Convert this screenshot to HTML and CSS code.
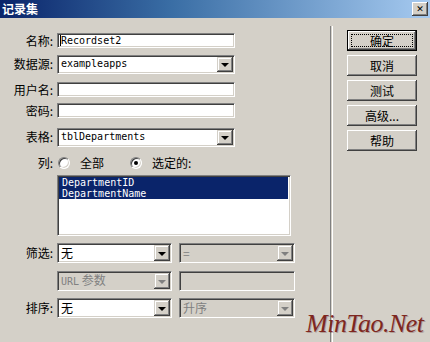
FILE: index.html
```html
<!DOCTYPE html>
<html lang="zh-CN">
  <head>
    <meta charset="UTF-8" />
    <title>记录集</title>
    <link rel="stylesheet" href="styles.css">
  </head>
  <body>
    <div class="window">
      <div class="titlebar">
        <span class="title">记录集</span>
        <span class="close">&#x2715;</span>
      </div>
      <div class="main">
        <div class="form">
          <div class="row r-name">
            <label class="lbl">名称:</label>
            <div class="edit wide"><span class="caret"></span>Recordset2</div>
          </div>
          <div class="row r-src">
            <label class="lbl">数据源:</label>
            <div class="select wide"><span class="val mono">exampleapps</span><span class="arrow"></span></div>
          </div>
          <div class="row r-user">
            <label class="lbl">用户名:</label>
            <div class="edit wide"></div>
          </div>
          <div class="row r-pass">
            <label class="lbl">密码:</label>
            <div class="edit wide"></div>
          </div>
          <div class="row r-table">
            <label class="lbl">表格:</label>
            <div class="select wide"><span class="val mono">tblDepartments</span><span class="arrow"></span></div>
          </div>
          <div class="row r-cols">
            <label class="lbl">列:</label>
            <span class="radio"></span><span class="opt">全部</span>
            <span class="radio on"></span><span class="opt">选定的:</span>
          </div>
          <div class="row r-list">
            <span class="lbl"></span>
            <div class="listbox">
              <div class="item sel">DepartmentID</div>
              <div class="item sel">DepartmentName</div>
            </div>
          </div>
          <div class="row r-filter">
            <label class="lbl">筛选:</label>
            <div class="select half"><span class="val">无</span><span class="arrow"></span></div>
            <div class="select half off"><span class="val">=</span><span class="arrow"></span></div>
          </div>
          <div class="row r-param">
            <span class="lbl"></span>
            <div class="select half off"><span class="val"><span class="mono">URL</span> 参数</span><span class="arrow"></span></div>
            <div class="edit half off"></div>
          </div>
          <div class="row r-sort">
            <label class="lbl">排序:</label>
            <div class="select half"><span class="val">无</span><span class="arrow"></span></div>
            <div class="select half off"><span class="val">升序</span><span class="arrow"></span></div>
          </div>
        </div>
        <div class="divider"></div>
        <div class="actions">
          <button class="btn default"><span class="focus">确定</span></button>
          <button class="btn">取消</button>
          <button class="btn">测试</button>
          <button class="btn">高级...</button>
          <button class="btn">帮助</button>
        </div>
      </div>
      <div class="watermark">MinTao.Net</div>
    </div>
  </body>
</html>
```

FILE: styles.css
```css
body {
  margin: 0;
  background: #d4d0c8;
}
.window {
  position: relative;
  width: 430px;
  height: 342px;
  overflow: hidden;
  background: #d4d0c8;
  font-family: "Noto Sans CJK SC", "Liberation Sans", sans-serif;
  font-size: 12px;
  line-height: 14px;
  color: #000;
}
.titlebar {
  height: 18px;
  display: flex;
  align-items: center;
  justify-content: space-between;
  padding: 0 2px 0 2px;
  background: linear-gradient(to right, #0a246a, #3a6ea5 40%, #a6caf0);
}
.title {
  color: #fff;
  font-weight: bold;
  font-size: 12px;
  line-height: 18px;
}
.close {
  width: 16px;
  height: 14px;
  box-sizing: border-box;
  background: #d4d0c8;
  box-shadow: inset -1px -1px #404040, inset 1px 1px #fff, inset -2px -2px #808080;
  font-family: "DejaVu Sans", sans-serif;
  font-size: 9px;
  font-weight: bold;
  line-height: 14px;
  text-align: center;
}
.main {
  display: flex;
  height: 324px;
}
.form {
  width: 330px;
  padding-top: 15px;
  box-sizing: border-box;
}
.row {
  display: flex;
  align-items: center;
  height: 20px;
}
.lbl {
  width: 53px;
  flex: none;
  text-align: right;
  margin-right: 4px;
  white-space: nowrap;
  line-height: 14px;
}
.r-name, .r-user, .r-pass { height: 15px; }
.r-src { margin-top: 6px; }
.r-user { margin-top: 8px; }
.r-pass { margin-top: 6px; }
.r-table { margin-top: 9px; }
.r-cols { margin-top: 9px; height: 14px; }
.r-list { margin-top: 5px; height: 61px; }
.r-filter { margin-top: 7px; }
.r-param { margin-top: 8px; }
.r-sort { margin-top: 7px; }
.mono {
  font-family: "DejaVu Sans Mono", "Liberation Mono", monospace;
  font-size: 10px;
}
.edit {
  height: 15px;
  box-sizing: border-box;
  background: #fff;
  border-top: 1px solid #808080;
  border-left: 1px solid #808080;
  border-right: 1px solid #fff;
  border-bottom: 1px solid #fff;
  box-shadow: inset 1px 1px #404040, inset -1px -1px #d4d0c8;
  padding-left: 2px;
  font-family: "DejaVu Sans Mono", "Liberation Mono", monospace;
  font-size: 10px;
  line-height: 13px;
  display: flex;
  align-items: center;
}
.caret {
  width: 1px;
  height: 11px;
  background: #000;
}
.wide { width: 178px; }
.half { width: 115px; flex: none; }
.half + .half { margin-left: 7px; width: 116px; }
.r-param .edit.half { height: 20px; }
.select {
  height: 20px;
  box-sizing: border-box;
  background: #fff;
  border-top: 1px solid #808080;
  border-left: 1px solid #808080;
  border-right: 1px solid #fff;
  border-bottom: 1px solid #fff;
  box-shadow: inset 1px 1px #404040, inset -1px -1px #d4d0c8;
  padding: 1px 1px 1px 3px;
  display: flex;
  align-items: center;
  justify-content: space-between;
}
.r-src .select, .r-table .select { height: 19px; }
.r-src .arrow, .r-table .arrow { height: 15px; }
.val {
  line-height: 16px;
  white-space: nowrap;
}
.arrow {
  width: 16px;
  height: 16px;
  flex: none;
  box-sizing: border-box;
  background: #d4d0c8;
  box-shadow: inset -1px -1px #404040, inset 1px 1px #d4d0c8, inset -2px -2px #808080, inset 2px 2px #fff;
  display: flex;
  align-items: center;
  justify-content: center;
}
.arrow::after {
  content: "";
  border-left: 4px solid transparent;
  border-right: 4px solid transparent;
  border-top: 4px solid #000;
  margin-top: 1px;
}
.off {
  background: #d4d0c8;
  color: #808080;
}
.off .arrow::after {
  border-top-color: #808080;
}
.radio {
  width: 12px;
  height: 12px;
  flex: none;
  box-sizing: border-box;
  border-radius: 50%;
  background: #fff;
  border: 1px solid;
  border-color: #808080 #fff #fff #808080;
  box-shadow: inset 1px 1px #404040, inset -1px -1px #d4d0c8;
  display: flex;
  align-items: center;
  justify-content: center;
  margin-left: 1px;
}
.radio.on::after {
  content: "";
  width: 4px;
  height: 4px;
  border-radius: 50%;
  background: #000;
}
.opt {
  margin-left: 10px;
  margin-right: 25px;
}
.listbox {
  width: 234px;
  height: 61px;
  box-sizing: border-box;
  background: #fff;
  border-top: 1px solid #808080;
  border-left: 1px solid #808080;
  border-right: 1px solid #fff;
  border-bottom: 1px solid #fff;
  box-shadow: inset 1px 1px #404040, inset -1px -1px #d4d0c8;
  padding: 1px 2px 1px 1px;
}
.item {
  font-family: "DejaVu Sans Mono", "Liberation Mono", monospace;
  font-size: 10px;
  line-height: 11px;
  padding-left: 3px;
}
.item.sel {
  background: #0a246a;
  color: #fff;
}
.divider {
  width: 1px;
  margin-top: 8px;
  border-left: 1px solid #808080;
  border-right: 1px solid #fff;
}
.actions {
  display: flex;
  flex-direction: column;
  gap: 4px;
  padding-top: 12px;
  padding-left: 14px;
}
.btn {
  width: 70px;
  height: 21px;
  border: none;
  padding: 0;
  background: #d4d0c8;
  box-shadow: inset -1px -1px #404040, inset 1px 1px #fff, inset -2px -2px #808080, inset 2px 2px #d4d0c8;
  font-family: "Noto Sans CJK SC", "Liberation Sans", sans-serif;
  font-size: 12px;
  color: #000;
  line-height: 19px;
}
.btn.default {
  border: 1px solid #000;
  padding: 3px;
  display: flex;
}
.focus {
  flex: 1;
  border: 1px dotted #000;
  line-height: 11px;
}
.watermark {
  position: absolute;
  left: 306px;
  top: 309px;
  font-family: "Liberation Serif", serif;
  font-style: italic;
  font-size: 26px;
  line-height: 30px;
  letter-spacing: -0.5px;
  color: #7e2620;
  text-shadow: 1px 1px 0 rgba(60, 10, 10, 0.25);
}
```
